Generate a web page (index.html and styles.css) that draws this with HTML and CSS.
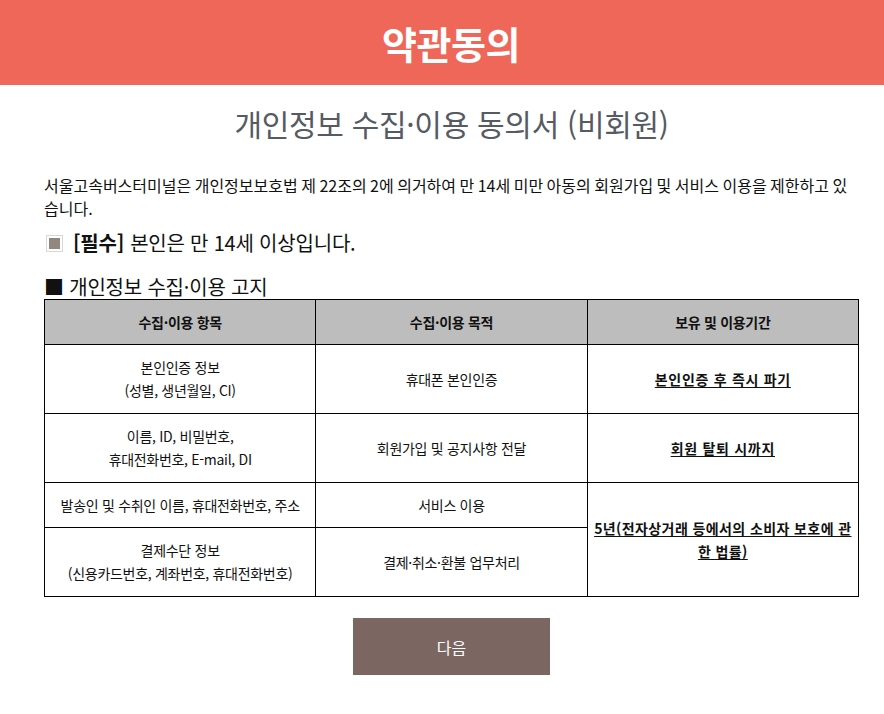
FILE: index.html
```html
<!DOCTYPE html>
<html lang="ko">
<head>
<meta charset="utf-8">
<title>약관동의</title>
<link rel="stylesheet" href="styles.css">
</head>
<body>
<header class="topbar"><h1>약관동의</h1></header>
<main class="content">
  <h2 class="subtitle">개인정보 수집·이용 동의서 (비회원)</h2>
  <p class="intro">서울고속버스터미널은 개인정보보호법 제 22조의 2에 의거하여 만 14세 미만 아동의 회원가입 및 서비스 이용을 제한하고 있습니다.</p>
  <label class="agree"><span class="box"><span class="fill"></span></span><b>[필수]</b> 본인은 만 14세 이상입니다.</label>
  <h3 class="section">■ 개인정보 수집·이용 고지</h3>
  <table class="notice">
    <thead>
      <tr><th>수집·이용 항목</th><th>수집·이용 목적</th><th>보유 및 이용기간</th></tr>
    </thead>
    <tbody>
      <tr class="tall"><td>본인인증 정보<br>(성별, 생년월일, CI)</td><td>휴대폰 본인인증</td><td class="em">본인인증 후 즉시 파기</td></tr>
      <tr class="tall"><td>이름, ID, 비밀번호,<br>휴대전화번호, E-mail, DI</td><td>회원가입 및 공지사항 전달</td><td class="em">회원 탈퇴 시까지</td></tr>
      <tr class="short"><td>발송인 및 수취인 이름, 휴대전화번호, 주소</td><td>서비스 이용</td><td class="em long" rowspan="2">5년(전자상거래 등에서의 소비자 보호에 관한 법률)</td></tr>
      <tr class="tall"><td>결제수단 정보<br>(신용카드번호, 계좌번호, 휴대전화번호)</td><td>결제·취소·환불 업무처리</td></tr>
    </tbody>
  </table>
  <div class="actions"><button class="next" type="button">다음</button></div>
</main>
</body>
</html>
```
FILE: styles.css
```css
* { box-sizing: border-box; }
html, body { margin: 0; padding: 0; background: #fff; }
body {
  font-family: "Noto Sans CJK KR", "Noto Sans", sans-serif;
  color: #111;
}
.topbar {
  background: #ee6758;
  height: 85px;
  display: flex;
  align-items: center;
  justify-content: center;
  padding-left: 18px;
}
.topbar h1 {
  margin: 0;
  color: #fff;
  font-size: 38px;
  font-weight: 700;
  letter-spacing: -0.5px;
  line-height: 1;
}
.content {
  padding: 0 25px 0 44px;
}
.subtitle {
  margin: 17px 0 0;
  text-align: center;
  font-size: 30px;
  font-weight: 400;
  color: #555a63;
  line-height: 42px;
  letter-spacing: -0.3px;
}
.intro {
  margin: 30px 0 0;
  font-size: 16px;
  line-height: 23px;
  letter-spacing: 0;
  word-spacing: -1px;
  color: #111;
}
.agree {
  display: flex;
  align-items: center;
  margin-top: 9px;
  font-size: 20px;
  line-height: 28px;
  letter-spacing: -0.2px;
}
.agree b { font-weight: 700; margin-right: 6px; }
.box {
  width: 17px;
  height: 17px;
  border: 1px solid #d8d8d8;
  padding: 2px;
  margin: 0 10px 0 2px;
  display: inline-flex;
}
.fill { flex: 1; background: #928680; }
.section {
  margin: 18px 0 0;
  font-size: 20px;
  font-weight: 400;
  line-height: 24px;
  letter-spacing: -0.2px;
}
.notice {
  margin-top: 0;
  width: 815px;
  border-collapse: collapse;
  table-layout: fixed;
  font-size: 14px;
  letter-spacing: -0.3px;
}
.notice th, .notice td {
  border: 1px solid #000;
  text-align: center;
  vertical-align: middle;
  line-height: 23px;
  padding: 0 4px;
}
.notice th {
  background: #bdbdbd;
  font-weight: 700;
  height: 45px;
}
.notice tr.tall td { height: 69px; }
.notice tr.short td { height: 45px; }
.notice td.em {
  font-weight: 700;
  text-decoration: underline;
  text-underline-offset: 2px;
  letter-spacing: 0.7px;
}
.notice td.long { letter-spacing: 0.4px; }
.actions {
  display: flex;
  justify-content: center;
  margin-top: 21px;
}
.next {
  width: 197px;
  height: 57px;
  background: #7b6662;
  color: #fff;
  border: 0;
  font-family: inherit;
  font-size: 16px;
}
```
